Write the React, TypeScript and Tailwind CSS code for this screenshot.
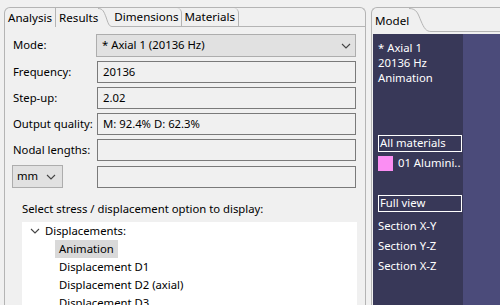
import React from "react";

const font = "font-['Noto_Sans',sans-serif]";

const Chevron = ({ className }: { className?: string }) => (
  <svg width="10" height="6" viewBox="0 0 10 6" className={className}>
    <path d="M1 1 L5 5 L9 1" fill="none" stroke="#444" strokeWidth="1.1" />
  </svg>
);

const TabCurve = () => (
  <svg width="14" height="19" viewBox="0 0 14 19" className="shrink-0">
    <path d="M0 0.5 C5 0.5 6 4 8 9 C10 15 11 18.5 14 18.5" fill="none" stroke="#b4b4b4" strokeWidth="1" />
  </svg>
);

const Field = ({ label, value }: { label: string; value?: string }) => (
  <div className="flex items-center h-[22px]">
    <div className="w-[92px] shrink-0 pl-[8px] whitespace-nowrap">{label}</div>
    <div className="flex-1 h-[22px] border border-[#7a7a7a] bg-[#f0f0f0] px-[5px] flex items-center whitespace-nowrap">
      {value}
    </div>
  </div>
);

const LeftPanel = () => (
  <div className="ml-[4px] w-[362px] h-full flex flex-col border-l border-t border-r border-[#b4b4b4] rounded-t-[6px] text-[11.3px] text-black">
    <div className="flex h-[19px] text-[11.6px]">
      <div className="px-[3px] border-r border-[#b4b4b4] flex items-center">Analysis</div>
      <div className="pl-[3px] flex items-center">Results</div>
      <TabCurve />
      <div className="flex flex-1 border-b border-[#b4b4b4]">
        <div className="px-[2px] border-r border-[#b4b4b4] rounded-tr-[5px] flex items-center">Dimensions</div>
        <div className="px-[3px] border-r border-[#b4b4b4] rounded-tr-[5px] flex items-center">Materials</div>
      </div>
    </div>
    <div className="flex flex-col pr-[9px] pt-[7px] gap-[4px]">
      <div className="flex items-center h-[23px]">
        <div className="w-[91px] shrink-0 pl-[8px]">Mode:</div>
        <div className="flex-1 h-[23px] border border-[#adadad] bg-[#e1e1e1] pl-[5px] pr-[4px] flex items-center justify-between">
          <span>* Axial 1 (20136 Hz)</span>
          <Chevron />
        </div>
      </div>
      <Field label="Frequency:" value="20136" />
      <Field label="Step-up:" value="2.02" />
      <Field label="Output quality:" value="M: 92.4% D: 62.3%" />
      <Field label="Nodal lengths:" />
      <div className="flex items-center h-[23px] gap-[34px] pl-[7px]">
        <div className="w-[51px] shrink-0 h-[23px] border border-[#adadad] bg-[#e1e1e1] pl-[4px] pr-[6px] flex items-center justify-between">
          <span>mm</span>
          <Chevron />
        </div>
        <div className="flex-1 h-[22px] border border-[#7a7a7a] bg-[#f0f0f0]" />
      </div>
    </div>
    <div className="flex-1 flex flex-col pl-[17px] pr-[8px] pt-[13px]">
      <div className="leading-[16px] whitespace-nowrap">Select stress / displacement option to display:</div>
      <div className="mt-[5px] bg-white flex-1">
        <div className="flex items-center h-[18px] pl-[8px] gap-[5px]">
          <Chevron />
          <span>Displacements:</span>
        </div>
        <div className="pl-[33px] flex flex-col">
          <div className="h-[18px] flex items-center">
            <span className="bg-[#d9d9d9] px-[4px] h-[18px] flex items-center">Animation</span>
          </div>
          <div className="h-[18px] flex items-center pl-[4px]">Displacement D1</div>
          <div className="h-[18px] flex items-center pl-[4px]">Displacement D2 (axial)</div>
          <div className="h-[18px] flex items-center pl-[4px]">Displacement D3</div>
        </div>
      </div>
    </div>
  </div>
);

const RightPanel = () => (
  <div className="ml-[5px] flex-1 h-full flex flex-col border-l border-t border-[#b4b4b4] rounded-tl-[6px] text-[11.3px]">
    <div className="flex h-[24px] text-[11.6px] text-black">
      <div className="pl-[3px] pt-[4px] flex items-start">Model</div>
      <svg width="22" height="24" viewBox="0 0 22 24" className="shrink-0">
        <path d="M0 0.5 C8 0.5 9 6 12 13 C15 20 17 23.5 22 23.5" fill="none" stroke="#b4b4b4" strokeWidth="1" />
      </svg>
      <div className="flex-1 border-b border-[#b4b4b4]" />
    </div>
    <div className="mt-[2px] ml-[1px] flex-1 flex bg-[#4b4b7a]">
      <div className="w-[90px] bg-[#383858] text-white flex flex-col pl-[5px] pr-[1px] pt-[6px] whitespace-nowrap">
        <div className="leading-[15px]">* Axial 1</div>
        <div className="leading-[15px]">20136 Hz</div>
        <div className="leading-[15px]">Animation</div>
        <div className="mt-[50px] h-[17px] border border-white pl-[1px] flex items-center">All materials</div>
        <div className="mt-[4px] flex items-center gap-[5px] h-[15px]">
          <div className="w-[15px] h-[15px] bg-[#fb8ef3] shrink-0" />
          <span>01 Alumini..</span>
        </div>
        <div className="mt-[24px] h-[17px] border border-white pl-[1px] flex items-center">Full view</div>
        <div className="mt-[4px] h-[20px] flex items-center">Section X-Y</div>
        <div className="h-[20px] flex items-center">Section Y-Z</div>
        <div className="h-[20px] flex items-center">Section X-Z</div>
      </div>
    </div>
  </div>
);

export default function App() {
  return (
    <div className={`w-[500px] h-[305px] bg-[#f0f0f0] flex pt-[7px] overflow-hidden ${font}`}>
      <LeftPanel />
      <RightPanel />
    </div>
  );
}
